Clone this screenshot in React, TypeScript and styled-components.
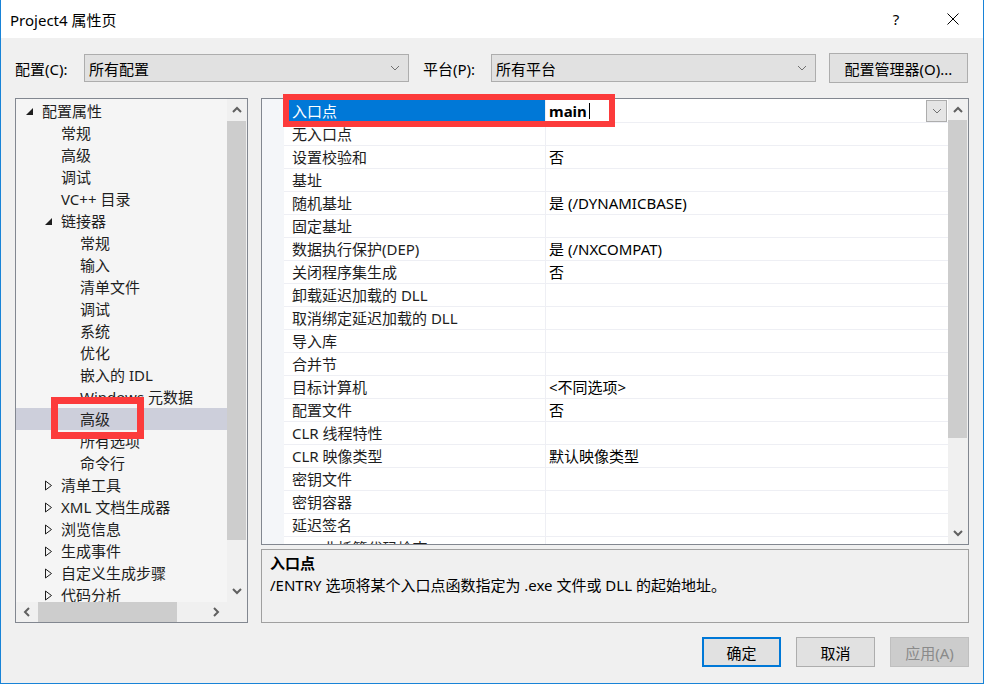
import React from "react";
import styled, { createGlobalStyle } from "styled-components";

const UI_FONT = `"Noto Sans", "Noto Sans CJK SC", sans-serif`;

const GlobalStyle = createGlobalStyle`
  html, body {
    margin: 0;
    padding: 0;
    background: #ffffff;
  }
  * {
    box-sizing: border-box;
  }
`;

const Window = styled.div`
  width: 984px;
  height: 684px;
  display: flex;
  flex-direction: column;
  border: 1px solid #1883d7;
  border-top: none;
  background: #f0f0f0;
  font-family: ${UI_FONT};
  font-size: 15px;
  color: #000;
  overflow: hidden;
`;

const TitleBar = styled.div`
  height: 38px;
  flex: none;
  display: flex;
  align-items: center;
  padding-left: 9px;
  background: #ffffff;
`;

const Title = styled.div`
  flex: 1;
`;

const TitleButtons = styled.div`
  display: flex;
  align-self: stretch;
  gap: 11px;
  margin-right: 7px;
`;

const TitleButton = styled.div`
  width: 46px;
  display: flex;
  align-items: center;
  justify-content: center;
`;

const Body = styled.div`
  flex: 1;
  display: flex;
  flex-direction: column;
  padding: 15px 14px 16px;
`;

/* configuration / platform bar */
const TopRow = styled.div`
  height: 30px;
  flex: none;
  display: flex;
  align-items: center;
  margin-bottom: 15px;
`;

const FieldLabel = styled.span<{ $width: number; $offset?: number }>`
  flex: none;
  width: ${({ $width }) => $width}px;
  margin-left: ${({ $offset }) => $offset ?? 0}px;
  white-space: nowrap;
`;

const Combo = styled.div`
  width: 325px;
  height: 28px;
  flex: none;
  display: flex;
  align-items: center;
  justify-content: space-between;
  padding: 0 8px 0 4px;
  border: 1px solid #adadad;
  background: #e1e1e1;
`;

const ToolButton = styled.div`
  width: 139px;
  height: 30px;
  flex: none;
  margin-left: 13px;
  display: flex;
  align-items: center;
  justify-content: center;
  border: 1px solid #adadad;
  background: #e1e1e1;
`;

const Main = styled.div`
  height: 525px;
  flex: none;
  display: flex;
  gap: 13px;
`;

/* left category tree */
const TreePanel = styled.div`
  width: 233px;
  flex: none;
  position: relative;
  display: grid;
  grid-template-columns: 1fr 20px;
  grid-template-rows: 1fr 20px;
  border: 1px solid #828790;
  background: #f5f5f5;
`;

const TreeBody = styled.div`
  overflow: hidden;
  padding-top: 1px;
`;

const TreeRow = styled.div<{ $level: number; $selected?: boolean }>`
  height: 22px;
  display: flex;
  align-items: center;
  padding-left: ${({ $level }) => 9 + $level * 19}px;
  line-height: 22px;
  white-space: nowrap;
  color: #1e1e1e;
  background: ${({ $selected }) => ($selected ? "#cdcfdb" : "transparent")};
`;

const Expander = styled.span`
  width: 17px;
  flex: none;
  display: flex;
  align-items: center;
`;

const VScroll = styled.div`
  display: flex;
  flex-direction: column;
  background: #f0f0f0;
`;

const HScroll = styled.div`
  display: flex;
  background: #f0f0f0;
`;

const ScrollCorner = styled.div`
  background: #f0f0f0;
`;

const ScrollArrow = styled.div<{ $size: number; $horizontal?: boolean }>`
  flex: none;
  ${({ $horizontal, $size }) => ($horizontal ? `width: ${$size}px;` : `height: ${$size}px;`)}
  display: flex;
  align-items: center;
  justify-content: center;
`;

const ScrollThumb = styled.div<{ $length: number; $horizontal?: boolean }>`
  flex: none;
  background: #cdcdcd;
  ${({ $horizontal, $length }) =>
    $horizontal ? `width: ${$length}px; margin: 0;` : `height: ${$length}px; margin: 0 1px 0 0;`}
`;

const ScrollGap = styled.div`
  flex: 1;
`;

/* right side: property grid + description */
const RightColumn = styled.div`
  flex: 1;
  display: flex;
  flex-direction: column;
  gap: 4px;
`;

const PropertyGrid = styled.div`
  height: 447px;
  flex: none;
  position: relative;
  display: grid;
  grid-template-columns: 1fr 20px;
  border: 1px solid #828790;
  background: #ffffff;
`;

const GridBody = styled.div`
  display: flex;
  overflow: hidden;
`;

const Gutter = styled.div`
  width: 22px;
  flex: none;
  background: #f4f6f9;
`;

const PropList = styled.div`
  flex: 1;
  padding-top: 1px;
`;

const PropRow = styled.div`
  height: 23px;
  display: flex;
  border-bottom: 1px solid #eeeff4;
`;

const NameCell = styled.div<{ $active?: boolean }>`
  width: 262px;
  flex: none;
  padding-left: 8px;
  line-height: 22px;
  white-space: nowrap;
  overflow: hidden;
  border-right: 1px solid #eeeff4;
  color: ${({ $active }) => ($active ? "#ffffff" : "#1e1e1e")};
  background: ${({ $active }) => ($active ? "#0078d7" : "transparent")};
`;

const ValueCell = styled.div`
  flex: 1;
  display: flex;
  align-items: center;
  padding-left: 3px;
  line-height: 22px;
  white-space: nowrap;
`;

const EditText = styled.span`
  font-weight: 700;
`;

const Caret = styled.span`
  width: 1px;
  height: 16px;
  margin-left: 2px;
  background: #000;
`;

const DropButton = styled.div`
  width: 21px;
  height: 22px;
  margin-left: auto;
  margin-right: 1px;
  display: flex;
  align-items: center;
  justify-content: center;
  border: 1px solid #adadad;
  background: #e5e5e5;
`;

const Description = styled.div`
  flex: 1;
  padding: 2px 8px 0;
  line-height: 22px;
  border: 1px solid #a0a0a0;
  background: #f0f0f0;
`;

const DescTitle = styled.div`
  font-weight: 700;
`;

const Callout = styled.div<{ $top: number; $left: number; $width: number; $height: number; $thick: number }>`
  position: absolute;
  top: ${({ $top }) => $top}px;
  left: ${({ $left }) => $left}px;
  width: ${({ $width }) => $width}px;
  height: ${({ $height }) => $height}px;
  border: ${({ $thick }) => $thick}px solid #fc3b3b;
  pointer-events: none;
`;

const Footer = styled.div`
  height: 30px;
  flex: none;
  margin-top: 14px;
  display: flex;
  justify-content: flex-end;
  gap: 15px;
`;

const DialogButton = styled.div<{ $variant?: "default" | "disabled" }>`
  width: 79px;
  height: 30px;
  display: flex;
  align-items: center;
  justify-content: center;
  background: ${({ $variant }) => ($variant === "disabled" ? "#cccccc" : "#e1e1e1")};
  color: ${({ $variant }) => ($variant === "disabled" ? "#8a8a8a" : "#000")};
  border: ${({ $variant }) =>
    $variant === "default"
      ? "2px solid #0078d7"
      : $variant === "disabled"
      ? "1px solid #bfbfbf"
      : "1px solid #adadad"};
`;

type Dir = "up" | "down" | "left" | "right";

const Chevron: React.FC<{ dir: Dir; thin?: boolean }> = ({ dir, thin }) => {
  const vertical = dir === "up" || dir === "down";
  const paths: Record<Dir, string> = {
    up: "M1 6 L5 2 L9 6",
    down: "M1 2 L5 6 L9 2",
    left: "M6 1 L2 5 L6 9",
    right: "M2 1 L6 5 L2 9",
  };
  return (
    <svg width={vertical ? 10 : 8} height={vertical ? 8 : 10} viewBox={vertical ? "0 0 10 8" : "0 0 8 10"}>
      <path
        d={paths[dir]}
        fill="none"
        stroke={thin ? "#707070" : "#606060"}
        strokeWidth={thin ? 1 : 2}
      />
    </svg>
  );
};

const ExpandGlyph: React.FC<{ open: boolean }> = ({ open }) =>
  open ? (
    <svg width="9" height="10" viewBox="0 0 9 10">
      <polygon points="8,2 8,9 1,9" fill="#1e1e1e" />
    </svg>
  ) : (
    <svg width="9" height="11" viewBox="0 0 9 11">
      <polygon points="1.5,1 7.5,5.5 1.5,10" fill="none" stroke="#1e1e1e" strokeWidth="1" />
    </svg>
  );

const CloseIcon = () => (
  <svg width="12" height="12" viewBox="0 0 12 12">
    <path d="M0.5 0.5 L11.5 11.5 M11.5 0.5 L0.5 11.5" stroke="#000" strokeWidth="1" />
  </svg>
);

type TreeItem = { label: string; level: number; expander?: "open" | "closed"; selected?: boolean };

const treeItems: TreeItem[] = [
  { label: "配置属性", level: 0, expander: "open" },
  { label: "常规", level: 1 },
  { label: "高级", level: 1 },
  { label: "调试", level: 1 },
  { label: "VC++ 目录", level: 1 },
  { label: "链接器", level: 1, expander: "open" },
  { label: "常规", level: 2 },
  { label: "输入", level: 2 },
  { label: "清单文件", level: 2 },
  { label: "调试", level: 2 },
  { label: "系统", level: 2 },
  { label: "优化", level: 2 },
  { label: "嵌入的 IDL", level: 2 },
  { label: "Windows 元数据", level: 2 },
  { label: "高级", level: 2, selected: true },
  { label: "所有选项", level: 2 },
  { label: "命令行", level: 2 },
  { label: "清单工具", level: 1, expander: "closed" },
  { label: "XML 文档生成器", level: 1, expander: "closed" },
  { label: "浏览信息", level: 1, expander: "closed" },
  { label: "生成事件", level: 1, expander: "closed" },
  { label: "自定义生成步骤", level: 1, expander: "closed" },
  { label: "代码分析", level: 1, expander: "closed" },
];

const properties: [string, string][] = [
  ["入口点", "main"],
  ["无入口点", ""],
  ["设置校验和", "否"],
  ["基址", ""],
  ["随机基址", "是 (/DYNAMICBASE)"],
  ["固定基址", ""],
  ["数据执行保护(DEP)", "是 (/NXCOMPAT)"],
  ["关闭程序集生成", "否"],
  ["卸载延迟加载的 DLL", ""],
  ["取消绑定延迟加载的 DLL", ""],
  ["导入库", ""],
  ["合并节", ""],
  ["目标计算机", "<不同选项>"],
  ["配置文件", "否"],
  ["CLR 线程特性", ""],
  ["CLR 映像类型", "默认映像类型"],
  ["密钥文件", ""],
  ["密钥容器", ""],
  ["延迟签名", ""],
  ["CLR 非托管代码检查", ""],
];

const App: React.FC = () => {
  return (
    <>
      <GlobalStyle />
      <Window>
        <TitleBar>
          <Title>Project4 属性页</Title>
          <TitleButtons>
            <TitleButton>?</TitleButton>
            <TitleButton>
              <CloseIcon />
            </TitleButton>
          </TitleButtons>
        </TitleBar>

        <Body>
          <TopRow>
            <FieldLabel $width={69}>配置(C):</FieldLabel>
            <Combo>
              <span>所有配置</span>
              <Chevron dir="down" thin />
            </Combo>
            <FieldLabel $width={68} $offset={14}>
              平台(P):
            </FieldLabel>
            <Combo>
              <span>所有平台</span>
              <Chevron dir="down" thin />
            </Combo>
            <ToolButton>配置管理器(O)...</ToolButton>
          </TopRow>

          <Main>
            <TreePanel>
              <TreeBody>
                {treeItems.map((item, i) => (
                  <TreeRow key={i} $level={item.level} $selected={item.selected}>
                    <Expander>{item.expander && <ExpandGlyph open={item.expander === "open"} />}</Expander>
                    {item.label}
                  </TreeRow>
                ))}
              </TreeBody>
              <VScroll>
                <ScrollArrow $size={22}>
                  <Chevron dir="up" />
                </ScrollArrow>
                <ScrollThumb $length={419} />
                <ScrollGap />
                <ScrollArrow $size={22}>
                  <Chevron dir="down" />
                </ScrollArrow>
              </VScroll>
              <HScroll>
                <ScrollArrow $size={22} $horizontal>
                  <Chevron dir="left" />
                </ScrollArrow>
                <ScrollThumb $length={139} $horizontal />
                <ScrollGap />
                <ScrollArrow $size={22} $horizontal>
                  <Chevron dir="right" />
                </ScrollArrow>
              </HScroll>
              <ScrollCorner />
              <Callout $top={298} $left={35} $width={93} $height={42} $thick={7} />
            </TreePanel>

            <RightColumn>
              <PropertyGrid>
                <GridBody>
                  <Gutter />
                  <PropList>
                    {properties.map(([name, value], i) => (
                      <PropRow key={name}>
                        <NameCell $active={i === 0}>{name}</NameCell>
                        <ValueCell>
                          {i === 0 ? (
                            <>
                              <EditText>{value}</EditText>
                              <Caret />
                              <DropButton>
                                <Chevron dir="down" thin />
                              </DropButton>
                            </>
                          ) : (
                            value
                          )}
                        </ValueCell>
                      </PropRow>
                    ))}
                  </PropList>
                </GridBody>
                <VScroll>
                  <ScrollArrow $size={21}>
                    <Chevron dir="up" />
                  </ScrollArrow>
                  <ScrollThumb $length={318} />
                  <ScrollGap />
                  <ScrollArrow $size={22}>
                    <Chevron dir="down" />
                  </ScrollArrow>
                </VScroll>
                <Callout $top={-5} $left={21} $width={332} $height={33} $thick={6} />
              </PropertyGrid>

              <Description>
                <DescTitle>入口点</DescTitle>
                <div>/ENTRY 选项将某个入口点函数指定为 .exe 文件或 DLL 的起始地址。</div>
              </Description>
            </RightColumn>
          </Main>

          <Footer>
            <DialogButton $variant="default">确定</DialogButton>
            <DialogButton>取消</DialogButton>
            <DialogButton $variant="disabled">应用(A)</DialogButton>
          </Footer>
        </Body>
      </Window>
    </>
  );
};

export default App;
